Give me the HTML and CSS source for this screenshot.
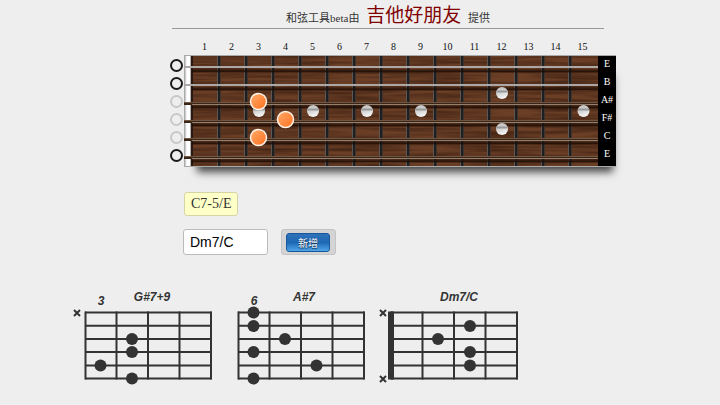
FILE: index.html
```html
<!DOCTYPE html>
<html lang="zh-Hant">
<head>
<meta charset="utf-8">
<title>和弦工具</title>
<link rel="stylesheet" href="styles.css">
</head>
<body>
<main class="tool">
  <header class="credit">和弦工具beta由 <a class="credit-link" href="#">吉他好朋友</a> 提供</header>

  <section class="neck" aria-label="指板">
    <ol class="fret-numbers">
      <li>1</li><li>2</li><li>3</li><li>4</li><li>5</li><li>6</li><li>7</li><li>8</li><li>9</li><li>10</li><li>11</li><li>12</li><li>13</li><li>14</li><li>15</li>
    </ol>
    <div class="open-strings">
      <button class="open on" type="button" aria-label="E"></button>
      <button class="open on" type="button" aria-label="B"></button>
      <button class="open" type="button" aria-label="G"></button>
      <button class="open" type="button" aria-label="D"></button>
      <button class="open" type="button" aria-label="A"></button>
      <button class="open on" type="button" aria-label="E"></button>
    </div>
    <div class="board">
      <svg class="wood" viewBox="0 0 414 112" aria-hidden="true">
        <defs>
          <filter id="grain" x="0" y="0" width="100%" height="100%" color-interpolation-filters="sRGB">
            <feTurbulence type="fractalNoise" baseFrequency="0.014 0.3" numOctaves="2" seed="8"/>
            <feColorMatrix values="0 0 0 0 0.16  0 0 0 0 0.07  0 0 0 0 0.03  1.1 0 0 0 -0.35"/>
          </filter>
          <linearGradient id="nut"><stop offset="0" stop-color="#bbb"/><stop offset=".3" stop-color="#fff"/><stop offset=".75" stop-color="#fff"/><stop offset="1" stop-color="#888"/></linearGradient>
          <linearGradient id="shade" x2="0" y2="1"><stop offset="0" stop-color="#1c0b03" stop-opacity=".25"/><stop offset=".6" stop-color="#1c0b03" stop-opacity=".85"/><stop offset="1" stop-color="#1c0b03" stop-opacity=".1"/></linearGradient>
          <linearGradient id="pearl" x2=".3" y2="1"><stop offset="0" stop-color="#c4c4c4"/><stop offset=".45" stop-color="#ccc"/><stop offset="1" stop-color="#f4f4f4"/></linearGradient>
          <linearGradient id="finger" x2="1" y2="1"><stop offset="0" stop-color="#ffac6c"/><stop offset="1" stop-color="#ff6f1c"/></linearGradient>
          <g id="fret"><path d="M-1.5 1v110" stroke="#5d5754"/><path d="M0 1v110" stroke="#1f1f21" stroke-width="2"/><path d="M1.5 1v110" stroke="#3f342e"/></g>
          <g id="plain"><rect x="8" y="2" width="406" height="4" fill="url(#shade)"/><path d="M0 0h414" stroke="#aca6a5" stroke-width="2"/></g>
          <g id="wound"><rect x="8" y="2" width="406" height="4" fill="url(#shade)"/><rect y="-1" width="414" height="3" fill="#3a2518"/><path d="M0-.5h414" stroke="#705640"/><path d="M8 1.5h406" stroke="#94806c"/></g>
          <g id="inlay"><circle r="6" fill="url(#pearl)"/><path d="M-5.5-1.5h11" stroke="#999" stroke-width="2"/></g>
          <circle id="dot" r="8" fill="url(#finger)" stroke="#fff3e8" stroke-width="1.5"/>
        </defs>
        <rect width="414" height="112" fill="#aaa"/>
        <rect x="8" y="1" width="406" height="110" fill="#6b3f26"/>
        <rect x="8" y="1" width="406" height="110" filter="url(#grain)"/>
        <rect x="1" y="1" width="6" height="110" fill="url(#nut)"/>
        <path d="M8 1v110" stroke="#2a1a12" stroke-width="2"/>
        <use href="#fret" x="35"/><use href="#fret" x="62"/><use href="#fret" x="89"/><use href="#fret" x="116"/><use href="#fret" x="143"/><use href="#fret" x="170"/><use href="#fret" x="197"/><use href="#fret" x="224"/><use href="#fret" x="251"/><use href="#fret" x="278"/><use href="#fret" x="305"/><use href="#fret" x="332"/><use href="#fret" x="359"/><use href="#fret" x="386"/>
        <use href="#plain" y="12"/><use href="#plain" y="30"/>
        <use href="#wound" y="48"/><use href="#wound" y="66"/><use href="#wound" y="84"/><use href="#wound" y="102"/>
        <use href="#inlay" x="75" y="56"/><use href="#inlay" x="129" y="56"/><use href="#inlay" x="183" y="56"/><use href="#inlay" x="237" y="56"/><use href="#inlay" x="318" y="38"/><use href="#inlay" x="318" y="74"/><use href="#inlay" x="399.5" y="56"/>
        <use href="#dot" x="74.5" y="46.5"/><use href="#dot" x="101.5" y="64.5"/><use href="#dot" x="74.5" y="82.5"/>
      </svg>
      <ul class="notes"><li>E</li><li>B</li><li>A#</li><li>F#</li><li>C</li><li>E</li></ul>
    </div>
  </section>

  <output class="chord-name">C7-5/E</output>

  <form class="add-chord">
    <input class="chord-input" type="text" value="Dm7/C" aria-label="和弦">
    <span class="button-frame"><button class="add" type="button">新增</button></span>
  </form>

  <section class="charts" aria-label="和弦圖">
    <svg class="chart" viewBox="0 0 153 100">
      <use href="#grid"/>
      <path class="mute" d="M2 20l6 6m0-6l-6 6"/>
      <circle cx="60" cy="49" r="6"/><circle cx="60" cy="62" r="6"/><circle cx="28.5" cy="75.5" r="6"/><circle cx="60" cy="88.5" r="6"/>
      <text x="29" y="15">3</text><text x="80" y="11">G#7+9</text>
    </svg>
    <svg class="chart" viewBox="0 0 153 100">
      <use href="#grid"/>
      <circle cx="28.5" cy="22.5" r="6"/><circle cx="28.5" cy="36" r="6"/><circle cx="60" cy="49" r="6"/><circle cx="28.5" cy="62" r="6"/><circle cx="91.5" cy="75.5" r="6"/><circle cx="28.5" cy="88.5" r="6"/>
      <text x="29" y="15">6</text><text x="79" y="11">A#7</text>
    </svg>
    <svg class="chart" viewBox="0 0 153 100">
      <defs>
        <g id="grid" class="grid"><path d="M13 22.5h126.5M13 35.7h126.5M13 49h126.5M13 62h126.5M13 75.5h126.5M13 88.5h126.5"/><path d="M13.5 21.5v68M44.5 21.5v68M76 21.5v68M107.5 21.5v68M139 21.5v68"/></g>
      </defs>
      <use href="#grid"/>
      <rect x="10" y="21.5" width="6" height="68"/>
      <path class="mute" d="M2 20l6 6m0-6l-6 6M2 86l6 6m0-6l-6 6"/>
      <circle cx="92" cy="36" r="6"/><circle cx="60" cy="49" r="6"/><circle cx="92" cy="62" r="6"/><circle cx="92" cy="75.5" r="6"/>
      <text x="81" y="11">Dm7/C</text>
    </svg>
  </section>
</main>
</body>
</html>
```
FILE: styles.css
```css
* { box-sizing: border-box; }

body {
  margin: 0;
  background: #eee;
  color: #333;
  font-family: "Liberation Serif", "Noto Sans CJK TC", serif;
}

ol, ul { margin: 0; padding: 0; list-style: none; }

.tool { padding-left: 172px; }

.credit {
  max-width: 432px;
  height: 29px;
  border-bottom: 1px solid #999;
  font-size: 11px;
  line-height: 36px;
  text-align: center;
}

.credit-link {
  margin: 0 4px;
  color: #800000;
  font-size: 19px;
  line-height: 1;
  text-decoration: none;
}

.neck {
  display: grid;
  grid-template-columns: 14px max-content;
  margin: 10px 0 0 -2px;
}

.fret-numbers {
  grid-column: 2;
  display: grid;
  grid-template-columns: repeat(15, 27px);
  padding-left: 7px;
  color: #111;
  font-size: 10px;
  line-height: 16px;
  text-align: center;
}

.open-strings {
  display: grid;
  grid-auto-rows: 18px;
  align-items: center;
  padding-top: 1px;
}

.open {
  width: 13px;
  height: 13px;
  padding: 0;
  border: 2px solid #c8c8c8;
  border-radius: 50%;
  background: transparent;
}

.open.on { border-color: #1a1a1a; }

.board {
  display: flex;
  box-shadow: 5px 13px 8px -8px #444;
}

.wood { display: block; width: 414px; }

.notes {
  display: grid;
  grid-auto-rows: 18px;
  width: 18px;
  border: solid #aaa;
  border-width: 1px 0;
  background: #000;
  color: #fff;
  font-size: 10px;
  line-height: 16px;
  text-align: center;
}

.chord-name {
  display: block;
  width: max-content;
  margin: 25px 0 0 12px;
  padding: 0 6px;
  border: 1px solid #d4d4a4;
  border-radius: 3px;
  background: #ffffc8;
  font-size: 14px;
  line-height: 22px;
}

.add-chord {
  display: flex;
  align-items: center;
  gap: 13px;
  margin: 13px 0 0 11px;
}

.chord-input {
  width: 85px;
  height: 26px;
  padding: 0 6px;
  border: 1px solid #bbb;
  border-radius: 3px;
  background: #fff;
  color: #000;
  font: 14px "Liberation Sans", sans-serif;
}

.button-frame {
  display: flex;
  padding: 3px 5px 2px 4px;
  border: 1px solid #c4c4c4;
  border-radius: 3px;
  background: #d4d4d4;
}

.add {
  width: 44px;
  height: 19px;
  padding: 0;
  border: 1px solid #17579b;
  border-radius: 3px;
  background: linear-gradient(#2f72b8, #1e68b4 50%, #4fa6e8);
  color: #fff;
  font: 10px "Liberation Serif", "Noto Sans CJK TC", serif;
  text-shadow: 0 1px 1px #123;
}

.charts {
  display: flex;
  margin: 35px 0 0 -100px;
}

.chart {
  width: 153px;
  height: 100px;
  fill: #333;
}

.chart text {
  font: italic bold 12px "Liberation Sans", sans-serif;
  text-anchor: middle;
}

.grid, .mute {
  fill: none;
  stroke: #333;
  stroke-width: 2;
}
```
